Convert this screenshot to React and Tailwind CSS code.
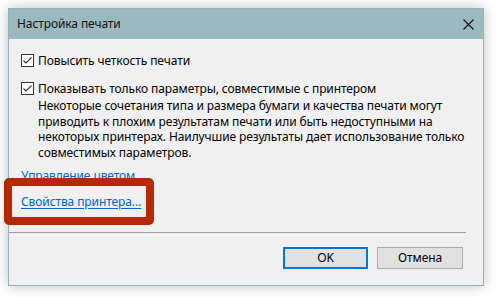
import React from 'react';

const font = { fontFamily: '"Noto Sans", "Open Sans", sans-serif' };

const CheckBox = () => (
  <span className="w-[13px] h-[13px] shrink-0 border border-[#333333] bg-white flex items-center justify-center">
    <svg width="11" height="11" viewBox="0 0 11 11">
      <path d="M1.5 5.5 L4 8 L9.5 2.5" fill="none" stroke="#333333" strokeWidth="1.1" />
    </svg>
  </span>
);

export default function App() {
  return (
    <div className="w-[498px] h-[297px] bg-white relative pl-[8px] pt-[8px] text-[12px] text-black tracking-[-0.1px]" style={font}>
      <div className="w-[476px] h-[278px] border border-[#93b3b9] bg-[#f0f0f0] flex flex-col shadow-[0_0_12px_rgba(0,0,0,0.25)]">
        {/* title bar */}
        <div className="h-[30px] shrink-0 bg-[#9bbac0] flex items-center justify-between pl-[8px] pr-[9px]">
          <span className="text-[12px] text-[#111]">Настройка печати</span>
          <svg width="11" height="11" viewBox="0 0 11 11">
            <path d="M0.5 0.5 L10.5 10.5 M10.5 0.5 L0.5 10.5" stroke="#111" strokeWidth="1.1" />
          </svg>
        </div>

        {/* body */}
        <div className="flex-1 flex flex-col pl-[12px] pt-[15px] leading-[15px]">
          <div className="flex items-center gap-[4px] h-[13px]">
            <CheckBox />
            <span>Повысить четкость печати</span>
          </div>

          <div className="flex gap-[4px] mt-[15px]">
            <CheckBox />
            <div className="-mt-[1px]">
              <div>Показывать только параметры, совместимые с принтером</div>
              <div className="mt-[2px] leading-[15.5px]">
                Некоторые сочетания типа и размера бумаги и качества печати могут<br />
                приводить к плохим результатам печати или быть недоступными на<br />
                некоторых принтерах. Наилучшие результаты дает использование только<br />
                совместимых параметров.
              </div>
            </div>
          </div>

          <span className="mt-[8px] text-[#0066cc] self-start">Управление цветом</span>
          <span className="mt-[11px] text-[#0066cc] underline underline-offset-2 self-start">Свойства принтера...</span>
        </div>

        {/* separator + buttons */}
        <div className="h-px bg-[#a0a0a0] mr-[17px]" />
        <div className="h-[52px] shrink-0 flex justify-end items-start gap-[9px] pt-[14px] pr-[20px]">
          <button className="w-[85px] h-[22px] border-2 border-[#0078d7] bg-[#e1e1e1] text-[12px]">OK</button>
          <button className="w-[86px] h-[22px] border border-[#adadad] bg-[#e1e1e1] text-[12px]">Отмена</button>
        </div>
      </div>

      {/* annotation highlight */}
      <div className="absolute left-[4px] top-[178px] w-[150px] h-[47px] border-[8px] border-[#b82800] rounded-[5px]" />
    </div>
  );
}
